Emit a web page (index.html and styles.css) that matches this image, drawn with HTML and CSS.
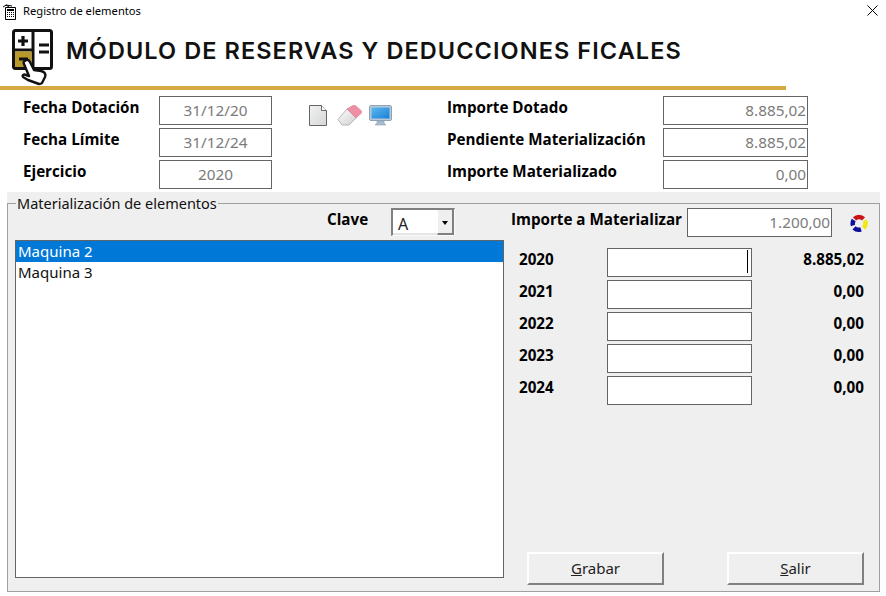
FILE: index.html
```html
<!DOCTYPE html>
<html lang="es">
<head>
<meta charset="utf-8">
<title>Registro de elementos</title>
<link rel="stylesheet" href="styles.css">
</head>
<body>
<div class="window">
  <div class="titlebar">
    <svg class="app-icon" width="14" height="16" viewBox="0 0 14 16"><path d="M2.500 3.500h10v12h-10z" fill="#fff" stroke="#000"/><path d="M4 5h7v2H4zM4 8h1v1H4zM6 8h1v1H6zM8 8h1v1H8zM10 8h1v1h-1zM4 10h1v1H4zM6 10h1v1H6zM8 10h1v1H8zM10 10h1v1h-1zM4 12h1v1H4zM6 12h1v1H6zM8 12h1v1H8zM10 12h1v1h-1z" fill="#000"/><path d="M0 3l3-2 3 2M3 1l6 1" stroke="#000" fill="none"/></svg>
    <span class="title-text">Registro de elementos</span>
    <svg class="close-icon" width="11" height="11" viewBox="0 0 11 11"><path d="M.5.500l10 10M10.500.500l-10 10" stroke="#000" fill="none"/></svg>
  </div>
  <header class="header">
    <svg class="logo" width="44" height="58" viewBox="0 0 44 58">
      <rect x="2.500" y="2.500" width="38" height="38" rx="2" fill="#fff" stroke="#111" stroke-width="3"/>
      <path d="M22 2v38" stroke="#111" stroke-width="3"/>
      <path d="M3 22h19" stroke="#111" stroke-width="3"/>
      <rect x="4" y="23.500" width="16.500" height="15.500" fill="#b8992a"/>
      <path d="M12 8v10M7 13h10" stroke="#111" stroke-width="3.200"/>
      <path d="M28 17h10M28 24h10" stroke="#111" stroke-width="3"/>
      <path d="M8 31h9" stroke="#111" stroke-width="3"/>
      <path d="M14 33c2-2 4-1 5 1l4 8 7 1c4 1 5 3 4 6l-3 6c-1 1-2 1-3 1l-11-4-5-3c-1-2 1-3 3-2l3 1-5-12c-1-2 0-3 1-3z" fill="#fff" stroke="#111" stroke-width="2.400" stroke-linejoin="round"/>
    </svg>
    <h1 class="heading">MÓDULO DE RESERVAS Y DEDUCCIONES FICALES</h1>
  </header>
  <div class="rule"></div>
  <section class="summary">
    <div class="summary-left">
      <div class="row"><span class="label label-left">Fecha Dotación</span><span class="field field-short center">31/12/20</span></div>
      <div class="row"><span class="label label-left">Fecha Límite</span><span class="field field-short center">31/12/24</span></div>
      <div class="row"><span class="label label-left">Ejercicio</span><span class="field field-short center">2020</span></div>
    </div>
    <div class="tools">
      <svg width="18" height="21" viewBox="0 0 18 21"><defs><linearGradient id="paper" x1="0" y1="0" x2="1" y2="1"><stop offset="0" stop-color="#f2f2f2"/><stop offset="1" stop-color="#d4d6d8"/></linearGradient></defs><path d="M.5.500h12l5 5v15H.5z" fill="url(#paper)" stroke="#666"/><path d="M12.500.500v5h5" fill="#fff" stroke="#666"/></svg>
      <svg width="25" height="21" viewBox="0 0 25 21"><defs><linearGradient id="rub" x1="0" y1="0" x2="1" y2="1"><stop offset="0" stop-color="#fff"/><stop offset="1" stop-color="#cfcfcf"/></linearGradient></defs><path d="M1 14.500L10 4l9 9-7 7H5z" fill="url(#rub)" stroke="#b5b5b5"/><path d="M10 4l6-3.500c1-.3 2-.3 3 .5l5 4.500c1 1 .8 2 0 3L19 13z" fill="#ee8fa6" stroke="#e08a9c" stroke-width=".8"/></svg>
      <svg width="23" height="21" viewBox="0 0 23 21"><defs><linearGradient id="scr" x1="0" y1="0" x2="1" y2="1"><stop offset="0" stop-color="#5cb8ee"/><stop offset="1" stop-color="#1a80d8"/></linearGradient></defs><rect x=".5" y=".5" width="22" height="15" rx="1.500" fill="#b8c8d8" stroke="#8fa3b5"/><rect x="2.500" y="2.500" width="18" height="11" fill="url(#scr)"/><path d="M8 16h7v2l2 2H6l2-2z" fill="#a8bccd" stroke="#8fa3b5" stroke-width=".6"/></svg>
    </div>
    <div class="summary-right">
      <div class="row"><span class="label label-right">Importe Dotado</span><span class="field field-long right">8.885,02</span></div>
      <div class="row"><span class="label label-right">Pendiente Materialización</span><span class="field field-long right">8.885,02</span></div>
      <div class="row"><span class="label label-right">Importe Materializado</span><span class="field field-long right">0,00</span></div>
    </div>
  </section>
  <main class="panel">
    <fieldset class="group">
      <legend class="legend">Materialización de elementos</legend>
      <div class="group-body">
        <div class="col-list">
          <div class="clave-row">
            <span class="label clave-label">Clave</span>
            <div class="combo"><span class="combo-value">A</span><span class="combo-btn"><span class="arrow"></span></span></div>
          </div>
          <div class="listbox">
            <div class="item selected">Maquina 2</div>
            <div class="item">Maquina 3</div>
          </div>
        </div>
        <div class="col-side">
          <div class="amount-row">
            <span class="label amount-label">Importe a Materializar</span>
            <span class="field field-long right">1.200,00</span>
            <svg class="recycle" width="18" height="18" viewBox="0 0 18 18" fill="none" stroke-width="4.500">
              <path d="M4.500 4.800C7 2.300 11 2.300 13.500 4.800" stroke="#c81414"/>
              <path d="M14.800 6.500c1.300 2.800.8 5.500-1.300 7.500" stroke="#f2e812"/>
              <path d="M11 15.300c-2.500.8-5 .4-7-1.500" stroke="#10109c"/>
              <path d="M3 11.500c-.6-2 -.3-3.800.7-5.500" stroke="#10109c"/>
            </svg>
          </div>
          <div class="years">
            <div class="year-row"><span class="label year">2020</span><span class="field field-long caret-field"><span class="caret"></span></span><span class="label total">8.885,02</span></div>
            <div class="year-row"><span class="label year">2021</span><span class="field field-long"></span><span class="label total">0,00</span></div>
            <div class="year-row"><span class="label year">2022</span><span class="field field-long"></span><span class="label total">0,00</span></div>
            <div class="year-row"><span class="label year">2023</span><span class="field field-long"></span><span class="label total">0,00</span></div>
            <div class="year-row"><span class="label year">2024</span><span class="field field-long"></span><span class="label total">0,00</span></div>
          </div>
          <div class="actions">
            <button class="btn" type="button"><u>G</u>rabar</button>
            <button class="btn" type="button"><u>S</u>alir</button>
          </div>
        </div>
      </div>
    </fieldset>
  </main>
</div>
</body>
</html>
```
FILE: styles.css
```css
* { box-sizing: border-box; }
html, body { margin: 0; padding: 0; background: #fff; }
body { font-family: "Open Sans", "Noto Sans", sans-serif; color: #000; overflow: hidden; }
.window { width: 886px; height: 596px; display: flex; flex-direction: column; }

.titlebar { height: 22px; display: flex; align-items: center; padding: 0 8px 0 3px; }
.app-icon { margin-top: 1px; }
.title-text { font-size: 11.200px; margin: -1px 0 0 6px; font-family: "Noto Sans", sans-serif; }
.close-icon { margin-left: auto; margin-top: -1px; }

.header { height: 64px; display: flex; align-items: flex-start; padding: 6px 0 0 11px; }
.logo { flex: none; }
.heading { margin: 8px 0 0 11px; font-family: Inter, sans-serif; font-size: 23.500px; font-weight: 600; line-height: 30px; letter-spacing: 1.080px; color: #111; white-space: nowrap; }
.rule { width: 786px; height: 4px; background: #d4a93f; flex: none; }

.summary { height: 102px; display: flex; padding: 6px 0 0 23px; }
.row { height: 29px; margin-bottom: 3px; display: flex; align-items: flex-start; }
.summary-left { width: 249px; flex: none; }
.summary-right { flex: none; }
.tools { width: 175px; flex: none; display: flex; gap: 10px; padding: 9px 0 0 37px; align-items: flex-start; }
.tools svg { flex: none; }
.tools svg:nth-child(3) { margin-left: -3px; }

.label { font-weight: 700; font-size: 15.200px; line-height: 23px; white-space: nowrap; font-family: "Open Sans", sans-serif; }
.label-left { width: 136px; flex: none; }
.label-right { width: 216px; flex: none; }

.field { display: block; height: 29px; border: 1px solid #646464; background: #fff; color: #7b7b7b; font-size: 15.300px; line-height: 26px; white-space: nowrap; flex: none; font-family: "Noto Sans", sans-serif; }
.field-short { width: 113px; }
.field-long { width: 145px; }
.center { text-align: center; }
.right { text-align: right; padding-right: 1px; }

.panel { width: 873px; height: 400px; margin-left: 7px; background: #efefef; padding-top: 2px; }
.group { height: 398px; margin: 0; padding: 0 7px 0 7px; border: 1px solid #a0a0a0; min-width: 0; }
.legend { margin-left: 1px; padding: 0 1px; font-size: 14.500px; line-height: 18px; height: 18px; font-family: "Noto Sans", sans-serif; color: #111; }
.group-body { display: flex; height: 376px; }

.col-list { width: 489px; flex: none; display: flex; flex-direction: column; }
.clave-row { flex: none; display: flex; align-items: flex-start; margin-top: -4px; padding-left: 312px; height: 32px; }
.clave-label { width: 64px; flex: none; }
.combo { width: 64px; height: 28px; display: flex; border-style: solid; border-width: 2px 1px 1px 2px; border-color: #808080 #fafafa #fafafa #808080; background: #fff; }
.combo-value { flex: 1; font-size: 16px; line-height: 28px; padding-left: 5px; font-family: "Noto Sans", sans-serif; color: #222; border-bottom: 2px solid #e4e4e4; }
.combo-btn { width: 17px; flex: none; background: #efefef; border-right: 2px solid #808080; border-bottom: 2px solid #808080; border-left: 1px solid #fff; display: flex; align-items: center; justify-content: center; }
.arrow { width: 0; height: 0; border-left: 3.500px solid transparent; border-right: 3.500px solid transparent; border-top: 4px solid #000; margin-top: 2px; }
.listbox { width: 489px; height: 338px; flex: none; background: #fff; border: 1px solid #646464; }
.item { height: 21px; font-size: 15px; line-height: 21px; padding-left: 2px; font-family: "Noto Sans", sans-serif; color: #111; }
.selected { background: #0078d7; color: #fff; }

.col-side { flex: 1; min-width: 0; padding-left: 7px; display: flex; flex-direction: column; margin-top: -4px; }
.amount-row { height: 40px; flex: none; display: flex; align-items: flex-start; }
.amount-label { width: 176px; flex: none; }
.recycle { margin: 6px 0 0 18px; flex: none; }
.years { height: 304px; flex: none; }
.year-row { height: 29px; margin-bottom: 3px; display: flex; align-items: flex-start; }
.year { width: 88px; flex: none; margin-left: 8px; }
.total { width: 112px; text-align: right; }
.caret-field { position: relative; }
.caret { position: absolute; right: 3px; top: 1px; width: 1px; height: 23px; background: #000; }

.actions { display: flex; gap: 63px; padding-left: 16px; }
.btn { width: 137px; height: 33px; font-family: "Noto Sans", sans-serif; font-size: 15px; line-height: 27px; color: #222; background: #efefef; border: 2px solid; border-color: #fff #808080 #808080 #fff; padding: 0 0 1px; }
```
